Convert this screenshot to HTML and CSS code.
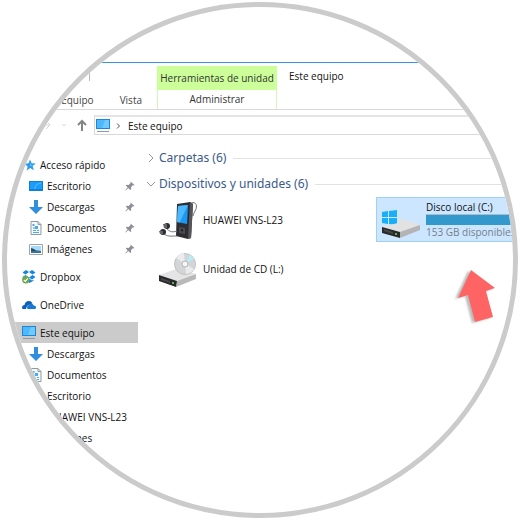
FILE: index.html
```html
<!DOCTYPE html>
<html lang="es">
<head>
    <meta charset="UTF-8">
    <meta name="viewport" content="width=device-width, initial-scale=1.0">
    <title>Este equipo</title>
    <link rel="stylesheet" href="styles.css">
</head>
<body>
    <!-- Shared icons -->
    <svg class="sprite" aria-hidden="true">
        <symbol id="pc" viewBox="0 0 14 14">
            <path d="M0 0h14v10H0z" fill="#1b87d6"/>
            <path d="M1 1h12v8H1z" fill="#4db8fb"/>
            <path d="M9 1h4v8H6z" fill="#6fcaff"/>
            <path d="M1 12h12v1H1z" fill="#8b9aa5"/>
        </symbol>
        <symbol id="star" viewBox="0 0 14 14">
            <path d="M8 1.500l1.700 3.700 4.100.2-3.200 2.700 1.300 4.200-3.700-2.200-3.500 2.500.9-4.200L2.500 5.700l4-.5z" fill="#2e9bea"/>
            <path d="M8 4l.8 2.400 2.200.3-2 1.500-1-.4z" fill="#5ec0ff"/>
        </symbol>
        <symbol id="desktop" viewBox="0 0 14 14">
            <path d="M0 2h14v10H0z" fill="#0f7fd8"/>
            <path d="M1 3h12v7H1z" fill="#1a9dfc"/>
            <path d="M6 10c0-3 1-5 6-6" fill="none" stroke="#5cc0ff"/>
        </symbol>
        <symbol id="download" viewBox="0 0 14 14">
            <path d="M5 0h4v7h5l-7 7-7-7h5z" fill="#2f8ede"/>
        </symbol>
        <symbol id="document" viewBox="0 0 14 14">
            <path d="M2 .5h7l3 3v10H2z" fill="#f5f9fc" stroke="#8f9aa2"/>
            <path d="M9 .5v3h3" fill="none" stroke="#8f9aa2"/>
            <path d="M3.500 3h2v2h-2zM6 5h3v3H6zM4 9h3v1H4zM8 9h2v1H8zM4 11h6v1H4z" fill="#50a8e4"/>
            <path d="M4 6h2v2H4z" fill="#8cc8ef"/>
        </symbol>
        <symbol id="picture" viewBox="0 0 14 14">
            <path d="M.5 2.500h13v10H.5z" fill="#fff" stroke="#9ba5ad"/>
            <path d="M2 4h10v7H2z" fill="#a5dafa"/>
            <path d="M2 7l4 1 6 1v2H2z" fill="#3b7396"/>
            <path d="M2 6l3 1 2 2H2z" fill="#294c63"/>
        </symbol>
        <symbol id="dropbox" viewBox="0 0 14 14">
            <path d="M4 0l3 2-3.500 2.500L.5 2.500zM10 0l3.500 2.500-3 2L7 2zM.5 7l3-2L7 7.500 4 9.500zM10.500 5l3 2L10 9.500 7 7.500zM7 8.500l3 2 1.500-.7v1L7.500 13 5 11z" fill="#1684e2"/>
            <circle cx="3.800" cy="9.800" r="3.700" fill="#6da84c"/>
            <path d="M1.800 9.800l1.500 1.500 2.500-3" fill="none" stroke="#fff" stroke-width="1.200"/>
        </symbol>
        <symbol id="cloud" viewBox="0 0 14 14">
            <path d="M0 10c0-2 1-3 2.500-3C3 4 5.500 2.500 8 3.200c1.200.3 2 1 2.500 2L5 8l-1 3H1.500C.5 11 0 10.500 0 10z" fill="#0d62b8"/>
            <path d="M5 9.500C5 8 6 7.300 7 7.300c.8-2 3.800-2.300 4.700.2 1.500 0 2.300.8 2.300 2 0 1-.7 1.500-1.600 1.500H6.500C5.500 11 5 10.400 5 9.500z" fill="#1478d4"/>
        </symbol>
        <symbol id="pin" viewBox="0 0 10 10">
            <path d="M5.500.5l4 3.500-1 .5-.7-.2-1.800 2 .2 2-.9.700L3.300 7 .8 9.500l-.4-.4L2.600 6.400.8 4.600l.8-.8 2 .1 2-1.800z" fill="#8e8e98"/>
        </symbol>
    </svg>

    <div class="lens">
        <header class="ribbon">
            <div class="ribbon-left">
                <span class="separator"></span>
                <nav class="tabs">
                    <a href="#equipo">Equipo</a>
                    <a href="#vista">Vista</a>
                </nav>
            </div>
            <div class="tool-tab">
                <span class="tool-title">Herramientas de unidad</span>
                <a href="#administrar" class="tool-link">Administrar</a>
            </div>
            <h1 class="window-title">Este equipo</h1>
        </header>

        <div class="address-row">
            <button type="button" class="nav-button faint" aria-label="Adelante">
                <svg viewBox="0 0 12 12"><path d="M1 6h9M6 2l4 4-4 4"/></svg>
            </button>
            <button type="button" class="nav-button faint" aria-label="Recientes">
                <svg viewBox="0 0 12 12"><path d="M4 5l2 2 2-2"/></svg>
            </button>
            <button type="button" class="nav-button" aria-label="Subir">
                <svg viewBox="0 0 12 12"><path d="M6 12V2M2 6l4-4 4 4"/></svg>
            </button>
            <nav class="address">
                <svg class="icon"><use href="#pc"/></svg>
                <svg class="crumb" viewBox="0 0 6 8"><path d="M2 1.500L4.500 4 2 6.500"/></svg>
                <a href="#este-equipo">Este equipo</a>
            </nav>
        </div>

        <div class="content">
            <nav class="sidebar">
                <ul>
                    <li><a href="#rapido"><svg class="icon"><use href="#star"/></svg>Acceso rápido</a></li>
                    <li class="child"><a href="#escritorio"><svg class="icon"><use href="#desktop"/></svg>Escritorio<svg class="pin"><use href="#pin"/></svg></a></li>
                    <li class="child"><a href="#descargas"><svg class="icon"><use href="#download"/></svg>Descargas<svg class="pin"><use href="#pin"/></svg></a></li>
                    <li class="child"><a href="#documentos"><svg class="icon"><use href="#document"/></svg>Documentos<svg class="pin"><use href="#pin"/></svg></a></li>
                    <li class="child"><a href="#imagenes"><svg class="icon"><use href="#picture"/></svg>Imágenes<svg class="pin"><use href="#pin"/></svg></a></li>
                </ul>
                <ul>
                    <li><a href="#dropbox-dir"><svg class="icon"><use href="#dropbox"/></svg>Dropbox</a></li>
                </ul>
                <ul>
                    <li><a href="#onedrive"><svg class="icon"><use href="#cloud"/></svg>OneDrive</a></li>
                </ul>
                <ul>
                    <li class="active"><a href="#este-equipo"><svg class="icon"><use href="#pc"/></svg>Este equipo</a></li>
                    <li class="child"><a href="#descargas"><svg class="icon"><use href="#download"/></svg>Descargas</a></li>
                    <li class="child"><a href="#documentos"><svg class="icon"><use href="#document"/></svg>Documentos</a></li>
                    <li class="child"><a href="#escritorio"><svg class="icon"><use href="#desktop"/></svg>Escritorio</a></li>
                    <li class="child"><a href="#huawei"><svg class="icon"><use href="#download"/></svg>HUAWEI VNS-L23</a></li>
                    <li class="child"><a href="#imagenes"><svg class="icon"><use href="#picture"/></svg>Imágenes</a></li>
                </ul>
            </nav>

            <main class="files">
                <h2 class="group">
                    <button type="button"><svg viewBox="0 0 10 10"><path d="M3 1l4 4-4 4"/></svg>Carpetas (6)</button>
                </h2>
                <h2 class="group">
                    <button type="button"><svg viewBox="0 0 10 10"><path d="M1 3l4 4 4-4"/></svg>Dispositivos y unidades (6)</button>
                </h2>

                <div class="drives">
                    <a href="#huawei" class="drive">
                        <svg viewBox="0 0 38 38">
                            <path d="M30 5c1-4 7-5 7.500 0 .3 4-3 6-3.500 10" fill="none" stroke="#77777c"/>
                            <path d="M18 3l13-2 3 2-2 34-3 1-12-3z" fill="#2e2e32"/>
                            <path d="M31 1l3 2-2 34-3 1z" fill="#55555b"/>
                            <path d="M19 5l10-1-1 19-10-2z" fill="#1899f5"/>
                            <path d="M19 5l9.800-1-8 17.500-2.800-.5z" fill="#4cb9ff"/>
                            <path d="M20 26l6 1v6l-6-1z" fill="#4a4a50"/>
                            <path d="M22 28l2 .4v2l-2-.4z" fill="#1d1d20"/>
                            <path d="M7 27c3 3 5 5 11 3M4 32c4 4 8 3 14 3" fill="none" stroke="#77777c"/>
                            <circle cx="8" cy="25" r="3" fill="#2c2c30"/>
                            <path d="M4 23h4v4H5z" fill="#65656b"/>
                            <circle cx="4" cy="31" r="3" fill="#2c2c30"/>
                            <path d="M0 30h4v3H1z" fill="#65656b"/>
                        </svg>
                        <span>HUAWEI VNS-L23</span>
                    </a>
                    <a href="#disco-c" class="drive selected">
                        <svg viewBox="0 0 38 38">
                            <path d="M0 11l6-1v6H0zM7 10l8-1v7H7zM0 17h6v6l-6-1zM7 17h8v7l-8-1z" fill="#18aef8"/>
                            <path d="M0 26l16-4V18l5 0 17 6-20 7z" fill="#e2e2e2"/>
                            <path d="M18 31l20-7v5l-20 8z" fill="#b4b4b4"/>
                            <path d="M0 26l18 5v6L0 32z" fill="#29292c"/>
                            <path d="M2 28l9 3v2l-9-3z" fill="#48484c"/>
                            <path d="M13 32l2 .6v1.500l-2-.6z" fill="#65e35b"/>
                        </svg>
                        <span class="drive-info">
                            <span>Disco local (C:)</span>
                            <span class="usage"></span>
                            <span class="free">153 GB disponibles</span>
                        </span>
                    </a>
                    <a href="#cd" class="drive">
                        <svg viewBox="0 0 38 38">
                            <path d="M0 25l20-7 17 6-19 7z" fill="#e4e4e4"/>
                            <path d="M18 31l19-7v5l-20 8z" fill="#b9b9b9"/>
                            <path d="M0 25l18 6-1 6L0 31z" fill="#29292c"/>
                            <path d="M2 28l9 3v2l-9-3z" fill="#48484c"/>
                            <path d="M13 32l2 .6v1.500l-2-.6z" fill="#65e35b"/>
                            <circle cx="26" cy="14" r="10.500" fill="#d3d5d7" stroke="#bfc1c3"/>
                            <path d="M26 14L17 8a11 11 0 0 1 8-5zM26 14l9 5a11 11 0 0 1-8 5z" fill="#e9ebed"/>
                            <path d="M26 14l5-9a11 11 0 0 1 4 4z" fill="#b7edf2"/>
                            <circle cx="26" cy="14" r="3" fill="#f7f7f7" stroke="#b4b4b4"/>
                        </svg>
                        <span>Unidad de CD (L:)</span>
                    </a>
                </div>
            </main>
        </div>

        <svg class="pointer" viewBox="0 0 38 54" aria-hidden="true">
            <path d="M14 0l24 18-9 3 7 26-18 5-7-27-10 3z" fill="#ff6464"/>
        </svg>
    </div>
</body>
</html>
```

FILE: styles.css
```css
/* General Styles */
* {
    box-sizing: border-box;
}

body {
    font-family: 'Open Sans', 'Noto Sans', sans-serif;
    font-size: 10px;
    line-height: 14px;
    margin: 0;
    background: #fff;
    color: #111;
}

a {
    color: inherit;
    text-decoration: none;
}

button {
    font: inherit;
    color: inherit;
    background: none;
    border: none;
    padding: 0;
}

.sprite {
    display: none;
}

/* Round frame */
.lens {
    position: relative;
    margin: 2px;
    aspect-ratio: 1;
    border: 5px solid #cbcbcb;
    border-radius: 50%;
    overflow: hidden;
    padding-top: 55px;
    white-space: nowrap;
}

/* Ribbon */
.ribbon {
    display: flex;
    border-top: 1px solid #3598e0;
    border-bottom: 1px solid #d9d9d9;
    padding-top: 3px;
}

.ribbon-left {
    width: 150px;
    padding: 5px 15px 2px 0;
    display: flex;
    flex-direction: column;
    justify-content: space-between;
}

.separator {
    width: 1px;
    height: 10px;
    margin-left: 82px;
    background: #bbb;
}

.tabs {
    display: flex;
    justify-content: flex-end;
    gap: 26px;
    color: #444;
}

.tool-tab {
    width: 120px;
    display: flex;
    flex-direction: column;
    text-align: center;
    color: #333;
}

.tool-title {
    background: #ccff99;
    line-height: 24px;
}

.tool-link {
    border: 1px solid #d5f5c0;
    border-width: 0 1px;
    line-height: 19px;
}

.window-title {
    margin: 3px 12px;
    font-size: 10px;
    font-weight: normal;
}

/* Address bar */
.address-row {
    display: flex;
    align-items: center;
    gap: 6px;
    padding: 5px 0 0 33px;
}

.nav-button {
    width: 12px;
    height: 12px;
}

.nav-button svg {
    display: block;
    fill: none;
    stroke: #858585;
    stroke-width: 2;
}

.nav-button.faint svg {
    stroke: #d5d5d5;
    stroke-width: 1;
}

.address {
    flex: 1;
    display: flex;
    align-items: center;
    height: 20px;
    padding-left: 1px;
    border: 1px solid #d9d9d9;
    border-top: 2px solid #e5e5e5;
}

.crumb {
    width: 6px;
    height: 8px;
    margin: 0 7px 0 5px;
    fill: none;
    stroke: #555;
}

.icon {
    width: 14px;
    height: 14px;
    flex: none;
}

/* Sidebar */
.content {
    display: flex;
    padding-top: 10px;
}

.sidebar {
    width: 131px;
    padding-top: 9px;
    display: flex;
    flex-direction: column;
    gap: 7px;
}

.sidebar ul {
    list-style: none;
    margin: 0;
    padding: 0;
}

.sidebar a {
    display: flex;
    align-items: center;
    gap: 4px;
    height: 21px;
    padding: 0 3px 0 15px;
}

.sidebar .child a {
    padding-left: 22px;
}

.active {
    background: #cbcbcb;
}

.pin {
    width: 10px;
    height: 10px;
    margin-left: auto;
}

/* Drives */
.files {
    flex: 1;
    min-width: 0;
    padding-left: 8px;
}

.group {
    display: flex;
    align-items: center;
    gap: 7px;
    height: 26px;
    margin: 0;
    font-family: 'Noto Sans', 'Open Sans', sans-serif;
    font-size: 12px;
    font-weight: normal;
    color: #3a5a8c;
}

.group::after {
    content: "";
    flex: 1;
    height: 1px;
    background: #e2e2e2;
}

.group button {
    display: flex;
    align-items: center;
    gap: 3px;
}

.group svg {
    width: 10px;
    height: 10px;
    fill: none;
    stroke: #999;
}

.drives {
    display: grid;
    grid-template-columns: 223px 1fr;
    gap: 4px 0;
    padding-left: 7px;
}

.drive {
    display: flex;
    align-items: center;
    gap: 6px;
    height: 45px;
    padding-left: 6px;
}

.drive > svg {
    width: 38px;
    height: 38px;
    flex: none;
}

.selected {
    background: #cce6ff;
    border: 1px solid #9fd0f7;
    padding-left: 5px;
}

.drive-info {
    flex: 1;
    display: flex;
    flex-direction: column;
}

.usage {
    height: 11px;
    background: #3398cc;
    border-top: 1px solid #a9bccb;
}

.free {
    color: #74808c;
}

/* Arrow over the window */
.pointer {
    position: absolute;
    left: 89%;
    top: 52%;
    width: 38px;
    height: 54px;
    filter: drop-shadow(-3px 1px 1px #bbb);
}
```
